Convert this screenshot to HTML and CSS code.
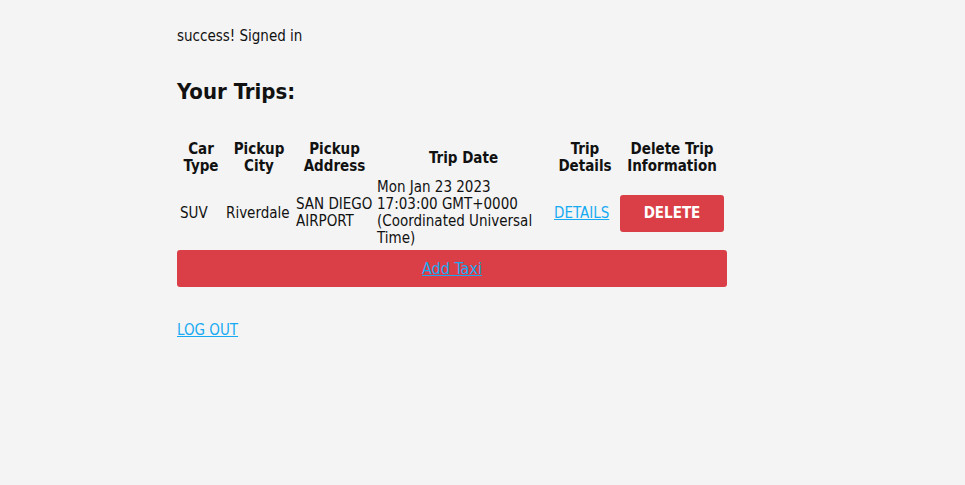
FILE: index.html
```html
<!DOCTYPE html>
<html>
<head>
<meta charset="utf-8">
<link rel="stylesheet" href="styles.css">
</head>
<body>
<div class="page">
  <div class="msg">success! Signed in</div>
  <h2 class="title">Your Trips:</h2>
  <table class="trips">
    <thead>
      <tr>
        <th class="c-type">Car<br>Type</th>
        <th class="c-city">Pickup<br>City</th>
        <th class="c-addr">Pickup<br>Address</th>
        <th class="c-date">Trip Date</th>
        <th class="c-det">Trip<br>Details</th>
        <th class="c-del">Delete Trip<br>Information</th>
      </tr>
    </thead>
    <tbody>
      <tr>
        <td>SUV</td>
        <td>Riverdale</td>
        <td>SAN DIEGO AIRPORT</td>
        <td>Mon Jan 23 2023 17:03:00 GMT+0000 (Coordinated Universal Time)</td>
        <td><a href="#" class="link">DETAILS</a></td>
        <td><button class="btn-delete">DELETE</button></td>
      </tr>
    </tbody>
  </table>
  <div class="add"><a href="#" class="link">Add Taxi</a></div>
  <div class="logout"><a href="#" class="link">LOG OUT</a></div>
</div>
</body>
</html>
```
FILE: styles.css
```css
html, body {
  margin: 0;
  background: #f4f4f4;
}
body {
  font-family: "DejaVu Sans Condensed", "DejaVu Sans", sans-serif;
  font-stretch: condensed;
  font-size: 15px;
  line-height: 17px;
  color: #111;
}
.page {
  width: 550px;
  padding: 28px 0 0 177px;
}
.msg {
  height: 17px;
}
.title {
  font-size: 22px;
  line-height: 26px;
  margin: 34px 0 0 0;
}
.trips {
  margin-top: 33px;
  width: 550px;
  table-layout: fixed;
  border-spacing: 2px;
}
.trips th, .trips td {
  padding: 1px;
}
.trips th {
  text-align: center;
  font-weight: bold;
}
.trips td {
  text-align: left;
  vertical-align: middle;
}
.c-type { width: 42px; }
.c-city { width: 66px; }
.c-addr { width: 77px; }
.c-date { width: 173px; }
.c-det { width: 62px; }
.c-del { width: 104px; }
.link {
  color: #17aaf2;
  text-decoration: underline;
}
.btn-delete {
  display: block;
  width: 104px;
  height: 37px;
  border: none;
  border-radius: 3px;
  background: #da3f47;
  color: #fff;
  font-family: inherit;
  font-stretch: condensed;
  font-size: 15px;
  font-weight: bold;
}
.add {
  height: 37px;
  background: #da3f47;
  border-radius: 3px;
  display: flex;
  align-items: center;
  justify-content: center;
  font-size: 16px;
}
.logout {
  margin-top: 35px;
}
```
